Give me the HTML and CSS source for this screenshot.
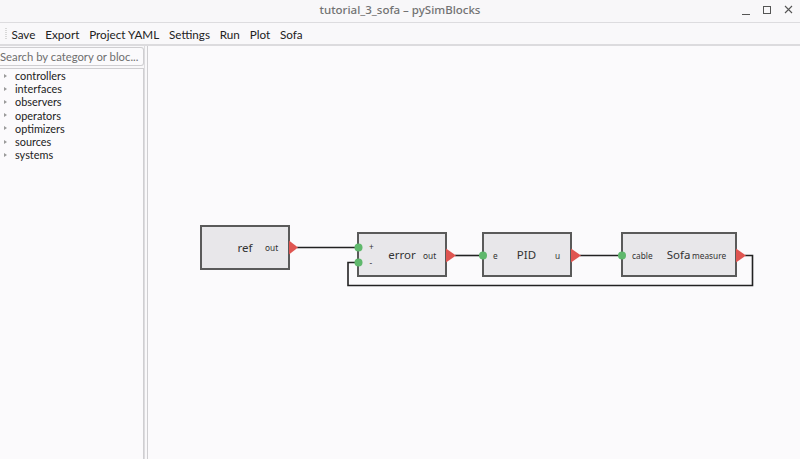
FILE: index.html
```html
<!DOCTYPE html>
<html>
<head>
<meta charset="utf-8">
<link rel="stylesheet" href="styles.css">
</head>
<body>
<div class="window">
  <div class="titlebar">
    <div class="title">tutorial_3_sofa – pySimBlocks</div>
    <div class="controls">
      <span class="ctl min"></span>
      <span class="ctl max"></span>
      <span class="ctl close">
        <svg width="9" height="9" viewBox="0 0 9 9"><path d="M1 1L8 8M8 1L1 8" stroke="#555" stroke-width="1.1"/></svg>
      </span>
    </div>
  </div>
  <div class="menubar">
    <span class="grip"></span>
    <span class="item">Save</span>
    <span class="item">Export</span>
    <span class="item">Project YAML</span>
    <span class="item">Settings</span>
    <span class="item">Run</span>
    <span class="item">Plot</span>
    <span class="item">Sofa</span>
  </div>
  <div class="main">
    <div class="sidebar">
      <div class="search">Search by category or bloc...</div>
      <ul class="tree">
        <li><span class="arrow"></span>controllers</li>
        <li><span class="arrow"></span>interfaces</li>
        <li><span class="arrow"></span>observers</li>
        <li><span class="arrow"></span>operators</li>
        <li><span class="arrow"></span>optimizers</li>
        <li><span class="arrow"></span>sources</li>
        <li><span class="arrow"></span>systems</li>
      </ul>
    </div>
    <div class="splitter"></div>
    <div class="canvas">
      <svg class="diagram" width="652" height="413" viewBox="148 46 652 413">
        <g class="wires" fill="none" stroke="#222" stroke-width="1.6">
          <path d="M297 247.5H358"/>
          <path d="M455 255.5H483"/>
          <path d="M580 255.5H622"/>
          <path d="M745 255.5H752.5V285.5H348V262.5H358"/>
        </g>
        <g class="block">
          <rect x="201" y="226" width="88" height="43" fill="#e8e7ea" stroke="#5a5a5a" stroke-width="2"/>
          <text x="245" y="251.5" class="bname" text-anchor="middle">ref</text>
          <text x="265" y="251" class="port">out</text>
          <path d="M289 240.5L298 247.5L289 254.5Z" fill="#df5551"/>
        </g>
        <g class="block">
          <rect x="358" y="233" width="88" height="43" fill="#e8e7ea" stroke="#5a5a5a" stroke-width="2"/>
          <text x="402" y="259" class="bname" text-anchor="middle">error</text>
          <text x="369" y="250" class="port">+</text>
          <text x="369.5" y="266" class="port">-</text>
          <text x="423" y="258.5" class="port">out</text>
          <circle cx="358.5" cy="247.5" r="4" fill="#5fb86c"/>
          <circle cx="358.5" cy="262.5" r="4" fill="#5fb86c"/>
          <path d="M446 248.5L456 255.5L446 262.5Z" fill="#df5551"/>
        </g>
        <g class="block">
          <rect x="483" y="233" width="88" height="43" fill="#e8e7ea" stroke="#5a5a5a" stroke-width="2"/>
          <text x="526.5" y="259" class="bname" text-anchor="middle">PID</text>
          <text x="493" y="258.5" class="port">e</text>
          <text x="555" y="258.5" class="port">u</text>
          <circle cx="483" cy="255.5" r="4" fill="#5fb86c"/>
          <path d="M571 248.5L581 255.5L571 262.5Z" fill="#df5551"/>
        </g>
        <g class="block">
          <rect x="622" y="233" width="114" height="43" fill="#e8e7ea" stroke="#5a5a5a" stroke-width="2"/>
          <text x="678.5" y="259" class="bname" text-anchor="middle">Sofa</text>
          <text x="632" y="258.5" class="port">cable</text>
          <text x="692" y="258.5" class="port">measure</text>
          <circle cx="622" cy="255.5" r="4" fill="#5fb86c"/>
          <path d="M736 248.5L746 255.5L736 262.5Z" fill="#df5551"/>
        </g>
      </svg>
    </div>
  </div>
</div>
</body>
</html>
```
FILE: styles.css
```css
* { box-sizing: border-box; }
html, body {
  margin: 0;
  padding: 0;
  width: 800px;
  height: 459px;
  overflow: hidden;
  background: #f9f8fa;
  font-family: Lato, "Noto Sans", sans-serif;
  color: #2e2e2e;
}
.window {
  display: flex;
  flex-direction: column;
  height: 459px;
}
.titlebar {
  position: relative;
  height: 23px;
  border-bottom: 1px solid #dddcdf;
  background: #f8f7f9;
  display: flex;
  align-items: center;
  justify-content: center;
}
.title {
  font-family: "Noto Sans", sans-serif;
  font-size: 11.5px;
  color: #727272;
  font-weight: 500;
  margin-top: -4px;
}
.controls {
  position: absolute;
  right: 7px;
  top: 5px;
  display: flex;
  gap: 13px;
  align-items: center;
}
.ctl {
  display: block;
  width: 9px;
  height: 9px;
  position: relative;
}
.ctl.min::after {
  content: "";
  position: absolute;
  left: 1px;
  right: 0;
  bottom: -1px;
  height: 1px;
  background: #555;
}
.ctl.max {
  border: 1px solid #555;
  width: 8px;
  height: 8px;
}
.ctl.close svg { display: block; }
.menubar {
  height: 23px;
  display: flex;
  align-items: center;
  padding-left: 4.5px;
  font-size: 11.7px;
  color: #222;
  border-bottom: 2px solid #dcdbde;
}
.grip {
  width: 2px;
  height: 12px;
  background: repeating-linear-gradient(#d8d8d8 0 1px, transparent 1px 2px);
}
.item {
  padding: 0 4.9px;
}
.main {
  flex: 1;
  display: flex;
  min-height: 0;
}
.sidebar {
  width: 144px;
  display: flex;
  flex-direction: column;
  padding-top: 1px;
}
.search {
  height: 19px;
  border: 1px solid #cfced1;
  border-left: none;
  border-radius: 0 3px 3px 0;
  font-size: 11.3px;
  color: #6e6e6e;
  line-height: 17px;
  white-space: nowrap;
  overflow: hidden;
  width: 144px;
  background: #fbfafc;
}
.tree {
  list-style: none;
  margin: 2px 0 0 0;
  padding: 0;
  flex: 1;
  border: 1px solid #cfced1;
  border-left: none;
  border-bottom: none;
  background: #fbfafc;
  font-size: 10.9px;
  color: #222;
}
.tree li {
  height: 13.2px;
  line-height: 13.2px;
  display: flex;
  align-items: center;
  white-space: nowrap;
}
.arrow {
  width: 0;
  height: 0;
  border-left: 3px solid #9a9a9a;
  border-top: 2.5px solid transparent;
  border-bottom: 2.5px solid transparent;
  margin-left: 4px;
  margin-right: 8px;
}
.splitter {
  width: 3px;
  border-left: 1px solid #dddcdf;
}
.canvas {
  flex: 1;
  border-left: 1px solid #cfced1;
  background: #fbfafc;
  overflow: hidden;
}
.diagram { display: block; }
.bname {
  font-family: "Noto Sans", sans-serif;
  font-size: 11.5px;
  fill: #333;
}
.port {
  font-family: "Noto Sans", sans-serif;
  font-size: 8.3px;
  fill: #333;
}
```
